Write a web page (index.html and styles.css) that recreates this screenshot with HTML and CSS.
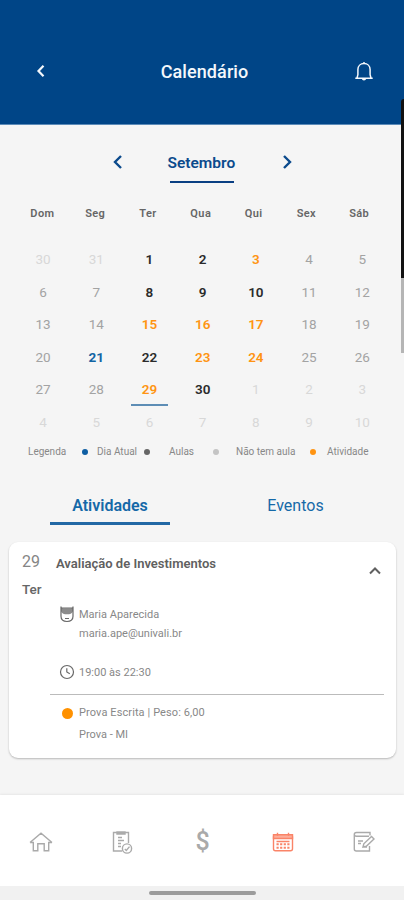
FILE: index.html
```
<!DOCTYPE html>
<html lang="pt-BR">
<head>
    <meta charset="UTF-8">
    <meta name="viewport" content="width=device-width, initial-scale=1.0">
    <title>Calendário</title>
    <link rel="stylesheet" href="styles.css">
</head>
<body>
    <div class="app">
        <header class="header">
            <svg class="back-icon" width="10" height="14" viewBox="0 0 10 14"><path d="M7.5 1.8 2.5 7l5 5.2"/></svg>
            <h1>Calendário</h1>
            <svg class="bell-icon" width="20" height="20" viewBox="0 0 20 20">
                <path d="M1.3 17.2h17.4M3 17l.9-3.4V8.5c0-3.6 2.6-5.9 6.1-5.9s6.1 2.3 6.1 5.9v5.1L17 17M10 2.4V1"/>
                <path class="bell-clapper" d="M7.8 17.5h4.4c-.2 1.3-1 2-2.2 2s-2-.7-2.2-2z"/>
            </svg>
        </header>

        <main>
            <div class="month">
                <svg width="10" height="16" viewBox="0 0 10 16"><path d="M8 2 2 8l6 6"/></svg>
                <h2 class="month-name">Setembro</h2>
                <svg width="10" height="16" viewBox="0 0 10 16"><path d="m2 2 6 6-6 6"/></svg>
            </div>

            <div class="weekdays">
                <span>Dom</span><span>Seg</span><span>Ter</span><span>Qua</span><span>Qui</span><span>Sex</span><span>Sáb</span>
            </div>

            <div class="days">
                <span class="out">30</span><span class="out">31</span><span class="class">1</span><span class="class">2</span><span class="activity">3</span><span>4</span><span>5</span>
                <span>6</span><span>7</span><span class="class">8</span><span class="class">9</span><span class="class">10</span><span>11</span><span>12</span>
                <span>13</span><span>14</span><span class="activity">15</span><span class="activity">16</span><span class="activity">17</span><span>18</span><span>19</span>
                <span>20</span><span class="today">21</span><span class="class">22</span><span class="activity">23</span><span class="activity">24</span><span>25</span><span>26</span>
                <span>27</span><span>28</span><span class="activity selected">29</span><span class="class">30</span><span class="out">1</span><span class="out">2</span><span class="out">3</span>
                <span class="out">4</span><span class="out">5</span><span class="out">6</span><span class="out">7</span><span class="out">8</span><span class="out">9</span><span class="out">10</span>
            </div>

            <div class="legend">
                <span class="legend-title">Legenda</span>
                <i class="dot dot-today"></i><span class="legend-today">Dia Atual</span>
                <i class="dot dot-class"></i><span class="legend-class">Aulas</span>
                <i class="dot dot-none"></i><span class="legend-none">Não tem aula</span>
                <i class="dot dot-activity"></i><span class="legend-activity">Atividade</span>
            </div>

            <nav class="tabs">
                <a class="tab active">Atividades</a>
                <a class="tab">Eventos</a>
            </nav>

            <section class="card">
                <div class="card-date">
                    <span class="card-day">29</span>
                    <span class="card-weekday">Ter</span>
                </div>
                <div class="card-body">
                    <div class="card-head">
                        <h3>Avaliação de Investimentos</h3>
                        <svg width="14" height="10" viewBox="0 0 14 10"><path d="m2 7.5 5-5 5 5"/></svg>
                    </div>
                    <div class="info teacher">
                        <svg width="16" height="18" viewBox="0 0 16 18">
                            <path class="hair" d="M2 2.5 4 3.2h8l2-.7v3.7c-1 2.6-3 3-6 3s-5-.4-6-3z"/>
                            <path d="M2 1.5v9.8c0 3.3 2.6 5.2 6 5.2s6-1.9 6-5.2V1.5M2.5 3h11M6 13.5h4"/>
                        </svg>
                        <p>Maria Aparecida<br>maria.ape@univali.br</p>
                    </div>
                    <div class="info time">
                        <svg width="16" height="16" viewBox="0 0 16 16"><circle cx="8" cy="8" r="6.5"/><path d="M7.8 4.3V8l3 1.7"/></svg>
                        <p>19:00 às 22:30</p>
                    </div>
                    <div class="info exam">
                        <i class="exam-dot"></i>
                        <p><span class="exam-name">Prova Escrita | Peso: 6,00</span><br>Prova - MI</p>
                    </div>
                </div>
            </section>
        </main>

        <nav class="bottom-nav">
            <svg width="24" height="24" viewBox="0 0 24 24"><path d="M1 12.5 12 3.2l11 9.3M1 12.5h3.3v8.3h4.5v-7h6.4v7h4.5v-8.3H23"/></svg>
            <svg width="24" height="26" viewBox="0 0 24 26">
                <path d="M12 22H3.5V3.5h15V14M7 3h8v2H7zM8 8.5h4M8 11.5h6M8 14.5h3M8 17.5h3"/>
                <circle cx="17" cy="19.5" r="4.6"/><path d="m14.8 20 1.5 1.4 3.2-3.8"/>
            </svg>
            <span class="money">$</span>
            <svg class="current" width="24" height="24" viewBox="0 0 24 24">
                <rect x="2.5" y="4.8" width="19" height="16" rx="2"/>
                <path class="calendar-top" d="M2.5 4.8h19v3.7h-19z"/>
                <path d="M6.5 2.8v3M17.5 2.8v3M5.5 11.5h13"/>
                <path class="calendar-cells" d="M5.5 14.3h13M5.5 17.8h13"/>
            </svg>
            <svg width="24" height="24" viewBox="0 0 24 24">
                <path d="M18 5.5V2.5H4.5c-1.300 0-2.200.7-2.200 2s.9 1.700 2.200 1.700H17M2.300 4.500v14.500c0 1.300.7 2 2 2H17.500v-5M6 11h5M6 13.500h3"/>
                <path d="m11 17 .8-3.200 7.700-7.300 2.500 2.500-7.700 7.300zM11 17h4"/>
            </svg>
        </nav>
        <div class="system-bar"><div class="home-pill"></div></div>
        <div class="edge-handle"></div>
    </div>
</body>
</html>
```

FILE: styles.css
```
* {
    box-sizing: border-box;
}

body {
    margin: 0;
    background: #f5f5f5;
    font-family: Roboto, sans-serif;
    color: #666;
}

h1, h2, h3, p {
    margin: 0;
}

svg {
    display: block;
    flex-shrink: 0;
    fill: none;
    stroke: currentColor;
}

.app {
    position: relative;
    display: flex;
    flex-direction: column;
    width: 404px;
    height: 900px;
    overflow: hidden;
}

main {
    flex: 1;
}

.header {
    display: flex;
    align-items: center;
    justify-content: space-between;
    height: 125px;
    padding: 18px 30px 0 36px;
    background: #004587;
    border-bottom: 1px solid #5c8bb8;
    color: #f4f8fc;
}

.header h1 {
    font-size: 18px;
    font-weight: 500;
    letter-spacing: 0.1px;
    margin-left: 9px;
}

.back-icon {
    stroke-width: 2.2;
}

.bell-icon {
    stroke-width: 1.5;
}

.bell-clapper {
    fill: currentColor;
    stroke: none;
}

.month {
    display: flex;
    justify-content: center;
    gap: 45px;
    padding-top: 29px;
    height: 58px;
    color: #0b4a8c;
}

.month svg {
    stroke-width: 2.4;
}

.month-name {
    position: relative;
    width: 69px;
    font-size: 15.5px;
    font-weight: 600;
    line-height: 18px;
    white-space: nowrap;
}

.month-name::after {
    content: "";
    position: absolute;
    left: 2px;
    right: 3px;
    bottom: 0;
    height: 2px;
    background: #0a3f83;
}

.weekdays {
    display: grid;
    grid-template-columns: repeat(7, 52.8px);
    padding: 21px 0 0 16px;
    height: 60px;
    font-size: 11px;
    font-weight: 600;
    line-height: 20px;
    letter-spacing: 0.4px;
    text-align: center;
}

.days {
    display: grid;
    grid-template-columns: repeat(7, 53.2px);
    grid-auto-rows: 32.6px;
    padding-left: 16.5px;
    font-size: 13.5px;
    line-height: 33px;
    text-align: center;
    color: #a3a3a3;
}

.days .out {
    color: #d8d8d8;
}

.days .class {
    color: #2b2b2b;
    font-weight: 600;
}

.days .activity {
    color: #ff9412;
    font-weight: 600;
}

.days .today {
    color: #1264a3;
    font-weight: 700;
}

.days .selected {
    margin: 0 8px;
    border-bottom: 2px solid #5d8db5;
}

.legend {
    display: flex;
    align-items: center;
    height: 26px;
    padding-left: 28px;
    font-size: 10px;
    color: #888;
    white-space: nowrap;
}

.legend-title {
    width: 54px;
}

.dot {
    width: 6px;
    height: 6px;
    border-radius: 50%;
}

.dot-today {
    background: #0e5ea3;
}

.dot-class {
    background: #666;
}

.dot-none {
    background: #c4c4c4;
}

.dot-activity {
    background: #ff9412;
}

.legend-today {
    width: 56px;
    padding-left: 9px;
}

.legend-class {
    width: 63px;
    padding-left: 19px;
}

.legend-none {
    width: 91px;
    padding-left: 17px;
}

.legend-activity {
    padding-left: 11px;
}

.tabs {
    display: flex;
    justify-content: space-between;
    padding: 22px 49px 0 50px;
    height: 77px;
}

.tab {
    width: 120px;
    height: 38px;
    font-size: 16px;
    line-height: 38px;
    text-align: center;
    color: #1569a8;
}

.tab:last-child {
    width: 119px;
}

.tab.active {
    font-weight: 600;
    border-bottom: 3px solid #2268a5;
}

.card {
    display: flex;
    width: 387px;
    height: 216px;
    margin-left: 9px;
    padding: 9px 12px 0 13px;
    background: #fff;
    border-radius: 9px;
    box-shadow: 0 1px 2px rgba(0, 0, 0, 0.25);
}

.card-date {
    display: flex;
    flex-direction: column;
    width: 28px;
}

.card-day {
    font-size: 16px;
    line-height: 22px;
    color: #858585;
}

.card-weekday {
    margin-top: 5px;
    font-size: 13.5px;
    font-weight: 500;
    line-height: 22px;
}

.card-body {
    flex: 1;
    color: #888;
}

.card-head {
    display: flex;
    justify-content: space-between;
    padding: 3px 2px 0 6px;
    height: 54px;
    color: #606060;
}

.card-head h3 {
    font-size: 13px;
    font-weight: 600;
    line-height: 20px;
}

.card-head svg {
    margin-top: 12px;
    stroke-width: 2;
}

.info {
    display: flex;
    align-items: flex-start;
    gap: 4px;
    padding-left: 9px;
    font-size: 11px;
}

.info svg {
    color: #686868;
    stroke-width: 1.2;
}

.teacher {
    height: 59px;
    line-height: 19px;
}

.teacher .hair {
    fill: #8c8c8c;
    stroke: none;
}

.time {
    height: 31px;
    line-height: 17px;
    border-bottom: 1px solid #bbb;
}

.exam {
    padding-top: 7px;
    line-height: 22px;
}

.exam-name {
    letter-spacing: 0.1px;
}

.exam-dot {
    width: 11px;
    height: 11px;
    margin: 6px 2px 0 3px;
    border-radius: 50%;
    background: #ff9100;
}

.bottom-nav {
    display: flex;
    align-items: center;
    justify-content: space-between;
    height: 91px;
    padding: 2px 28px 0 29px;
    background: #fff;
    box-shadow: 0 -1px 2px rgba(0, 0, 0, 0.06);
    color: #aaa;
}

.bottom-nav svg {
    stroke-width: 1.4;
}

.money {
    width: 24px;
    font-size: 25px;
    font-weight: 500;
    line-height: 28px;
    text-align: center;
}

.bottom-nav .current {
    color: #fa8468;
}

.calendar-top {
    fill: #fcae9b;
}

.calendar-cells {
    stroke-width: 2;
    stroke-dasharray: 2.2 1.4;
}

.system-bar {
    display: flex;
    justify-content: center;
    height: 14px;
    padding-top: 5px;
    background: #f1f1f1;
}

.home-pill {
    width: 107px;
    height: 4px;
    border-radius: 2px;
    background: #9c9c9c;
}

/* floating handle over the right edge of the screen */
.edge-handle {
    position: absolute;
    top: 99px;
    right: 0;
    width: 3px;
    height: 254px;
    border-radius: 3px 0 0 0;
    background: linear-gradient(#111 179px, #b5b5b5 179px);
}
```
